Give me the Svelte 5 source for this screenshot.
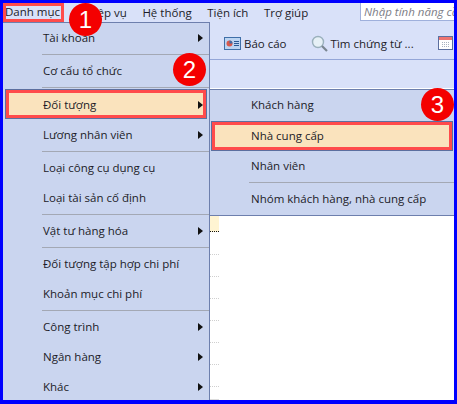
<script lang="ts">
	const topMenu = ['Danh mục', 'Nghiệp vụ', 'Hệ thống', 'Tiện ích', 'Trợ giúp'];

	const items = [
		{ label: 'Tài khoản', arrow: true, sep: true },
		{ label: 'Cơ cấu tổ chức', sep: true },
		{ label: 'Đối tượng', arrow: true, active: true },
		{ label: 'Lương nhân viên', arrow: true, sep: true },
		{ label: 'Loại công cụ dụng cụ' },
		{ label: 'Loại tài sản cố định', sep: true },
		{ label: 'Vật tư hàng hóa', arrow: true, sep: true },
		{ label: 'Đối tượng tập hợp chi phí' },
		{ label: 'Khoản mục chi phí', sep: true },
		{ label: 'Công trình', arrow: true },
		{ label: 'Ngân hàng', arrow: true },
		{ label: 'Khác', arrow: true }
	];

	const subItems = [
		{ label: 'Khách hàng' },
		{ label: 'Nhà cung cấp', active: true },
		{ label: 'Nhân viên', sep: true },
		{ label: 'Nhóm khách hàng, nhà cung cấp' }
	];
</script>

<div class="frame">
	<div class="window">
		<header class="menubar">
			{#each topMenu as name, i}
				<span class="top" class:top--open={i === 0}>{name}</span>
			{/each}
			<div class="search">Nhập tính năng cần tìm</div>
		</header>

		<div class="toolbar">
			<div class="tool">
				<svg width="17" height="13" viewBox="0 0 17 13">
					<rect x="0.5" y="0.5" width="16" height="12" fill="#bcd4f2" stroke="#3f6fa8" />
					<circle cx="5.500" cy="6.500" r="3" fill="#d8584c" />
					<path d="M5.500 6.500V3.500a3 3 0 0 1 3 3z" fill="#3f6fa8" />
					<path d="M10 4.500h5M10 6.500h5M10 8.500h5" stroke="#2c5a94" />
				</svg>
				<span>Báo cáo</span>
			</div>
			<div class="tool">
				<svg width="17" height="17" viewBox="0 0 17 17">
					<circle cx="7" cy="7" r="5.500" fill="#e6f0f6" stroke="#9ab0bc" stroke-width="1.400" />
					<path d="M11 11l5 5" stroke="#7a8690" stroke-width="2.200" />
				</svg>
				<span>Tìm chứng từ ...</span>
			</div>
			<svg class="calendar" width="15" height="14" viewBox="0 0 15 14">
				<rect x="0.500" y="0.500" width="14" height="13" fill="#fff" stroke="#5c6f9f" />
				<rect x="1" y="1" width="13" height="3" fill="#ee7470" />
				<path d="M4 6.500h8M4 8.500h8M4 10.500h8" stroke="#a9b2bf" stroke-dasharray="1 1" />
			</svg>
		</div>

		<div class="ribbon"></div>

		<div class="sheet">
			<div class="sheet__gutter"></div>
			<div class="sheet__grid">
				{#each { length: 8 } as _, i}
					<div class="row" class:row--first={i === 0} class:row--second={i === 1}></div>
				{/each}
				<div class="row row--last"></div>
			</div>
		</div>

		<nav class="menu">
			{#each items as item}
				<div class="item" class:item--active={item.active}>
					<span class="item__label">{item.label}</span>
					{#if item.arrow}<span class="item__arrow"></span>{/if}
				</div>
				{#if item.sep}<div class="sep"></div>{/if}
			{/each}
		</nav>

		<nav class="submenu">
			{#each subItems as item}
				<div class="item item--sub" class:item--active={item.active}>
					<span class="item__label">{item.label}</span>
				</div>
				{#if item.sep}<div class="sep"></div>{/if}
			{/each}
		</nav>

		<span class="badge badge--one">1</span>
		<span class="badge badge--two">2</span>
		<span class="badge badge--three">3</span>
	</div>
</div>

<style>
	:global(body) {
		margin: 0;
	}

	.frame {
		width: 457px;
		height: 404px;
		box-sizing: border-box;
		border: solid #0000ff;
		border-width: 3px 3px 4px 3px;
		overflow: hidden;
		font-family: 'Open Sans', 'Noto Sans', sans-serif;
		font-size: 11.500px;
		color: #1c1c28;
	}

	.window {
		position: relative;
		height: 100%;
		width: 451px;
		background: #d9e1f9;
		display: flex;
		flex-direction: column;
	}

	.menubar {
		height: 19px;
		display: flex;
		align-items: center;
		flex: none;
	}

	.top {
		padding: 0 7.750px;
		white-space: nowrap;
		line-height: 16px;
	}

	.top--open {
		padding: 0;
		flex: none;
		width: 61px;
		height: 19px;
		box-sizing: border-box;
		border: 3px solid #ff4b4b;
		margin-right: 1px;
		line-height: 12px;
		text-indent: -1px;
		overflow: hidden;
	}

	.search {
		position: absolute;
		left: 357px;
		top: 0;
		width: 94px;
		height: 18px;
		box-sizing: border-box;
		background: #fff;
		border: 1px solid #9fb0dc;
		border-top: none;
		border-right: none;
		font-style: italic;
		color: #7d7d86;
		line-height: 17px;
		padding-left: 3px;
		white-space: nowrap;
		overflow: hidden;
		font-size: 11.500px;
	}

	.toolbar {
		height: 38px;
		flex: none;
		display: flex;
		align-items: center;
		gap: 24px;
		padding: 5px 0 0 221px;
		border-bottom: 1px solid #94a6d8;
		box-sizing: border-box;
	}

	.tool {
		display: flex;
		align-items: center;
		gap: 3px;
		white-space: nowrap;
	}

	.calendar {
		flex: none;
	}

	.ribbon {
		height: 28px;
		flex: none;
	}

	.sheet {
		flex: 1;
		display: flex;
		background: #fff;
		min-height: 0;
		overflow: hidden;
	}

	.sheet__gutter {
		width: 207px;
		flex: none;
	}

	.sheet__grid {
		flex: 1;
		padding-top: 128px;
	}

	.row {
		height: 22px;
		width: 9px;
		box-sizing: border-box;
		border-bottom: 1px dotted #cfcfcf;
	}

	.row--first {
		height: 16px;
		background: #fff4d2;
		border-bottom-color: #111;
	}

	.row--second {
		margin-top: 1px;
	}

	.row--last {
		height: 13px;
		border-bottom: 1px solid #dcdcdc;
	}

	.menu,
	.submenu {
		position: absolute;
		background: #cad5ef;
		box-sizing: border-box;
	}

	.menu {
		left: 0;
		top: 19px;
		width: 207px;
		bottom: 0;
		border-top: 1px solid #6d7fad;
		border-right: 1px solid #6d7fad;
	}

	.submenu {
		left: 206px;
		top: 86px;
		width: 245px;
		height: 127px;
		border: 1px solid #6d7fad;
		border-right: none;
	}

	.item {
		position: relative;
		height: 30px;
		display: flex;
		align-items: center;
		padding: 0 0 2px 40px;
		box-sizing: border-box;
		white-space: nowrap;
	}

	.item--sub {
		padding-left: 41px;
	}

	.item--active {
		background: #fae3bd;
		border: 1px solid #5c6f9f;
		box-shadow: inset 0 0 0 3px #ff4b4b;
		margin: -1px 2px 1px 2px;
		padding: 0 0 0 37px;
	}

	.item--sub.item--active {
		margin: 1px 1px 0 1px;
		padding: 0 0 2px 39px;
	}

	.item__arrow {
		position: absolute;
		right: 6px;
		top: 11px;
		border-left: 5px solid #111;
		border-top: 4px solid transparent;
		border-bottom: 4px solid transparent;
	}

	.item--active .item__arrow {
		right: 3px;
	}

	.sep {
		height: 3px;
		margin: 1px 0 -1px 39px;
		box-sizing: border-box;
		border-top: 1px solid #a3a8b4;
	}

	.badge {
		position: absolute;
		width: 33px;
		height: 33px;
		border-radius: 50%;
		background: #f40000;
		color: #fff;
		font-family: 'Liberation Sans', sans-serif;
		font-size: 24px;
		display: flex;
		align-items: center;
		justify-content: center;
	}

	.badge--one {
		left: 66px;
		top: 0;
	}

	.badge--two {
		left: 170px;
		top: 50px;
	}

	.badge--three {
		left: 418px;
		top: 85px;
	}
</style>
